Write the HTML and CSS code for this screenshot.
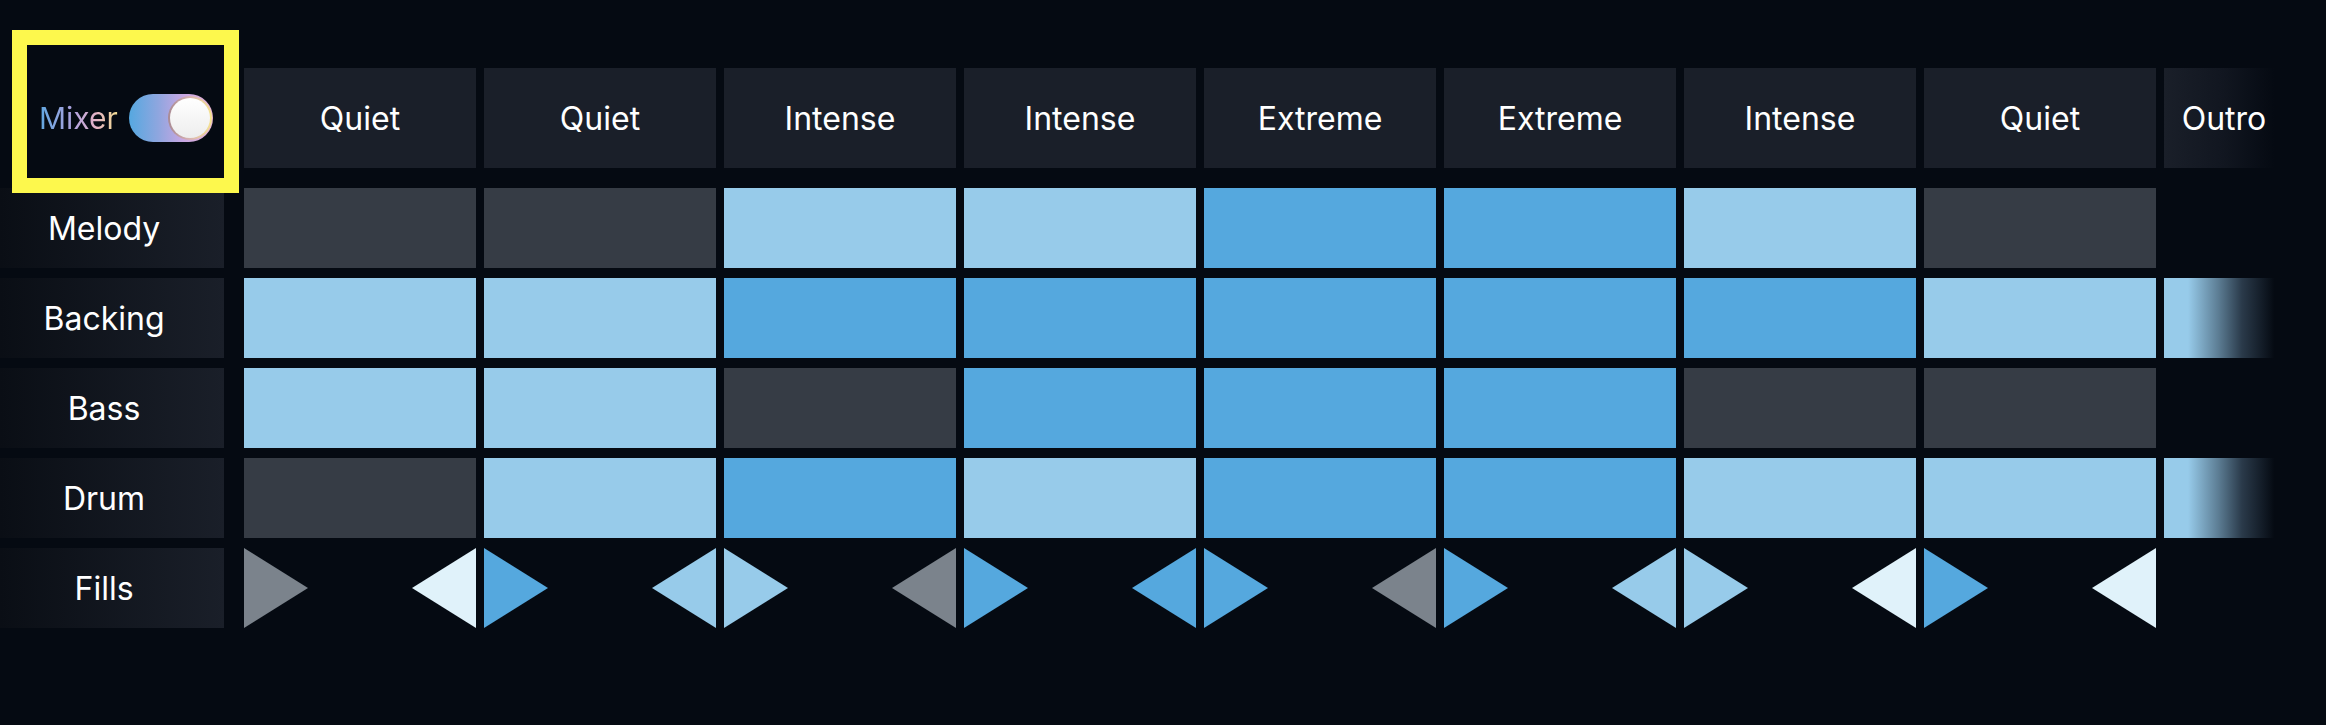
FILE: index.html
```html
<!DOCTYPE html>
<html lang="en">
<head>
<meta charset="utf-8">
<title>Mixer</title>
<link rel="stylesheet" href="styles.css">
</head>
<body>
<div class="app">
  <div class="row header-row">
    <div class="corner">
      <span class="mixer-label">Mixer</span>
      <div class="toggle"><div class="knob"></div></div>
    </div>
    <div class="hcell">Quiet</div>
    <div class="hcell">Quiet</div>
    <div class="hcell">Intense</div>
    <div class="hcell">Intense</div>
    <div class="hcell">Extreme</div>
    <div class="hcell">Extreme</div>
    <div class="hcell">Intense</div>
    <div class="hcell">Quiet</div>
    <div class="hcell outro">Outro</div>
  </div>

  <div class="rows">
    <div class="row track-row">
      <div class="label">Melody</div>
      <div class="cell off"></div>
      <div class="cell off"></div>
      <div class="cell light"></div>
      <div class="cell light"></div>
      <div class="cell blue"></div>
      <div class="cell blue"></div>
      <div class="cell light"></div>
      <div class="cell off"></div>
      <div class="cell outro-empty"></div>
    </div>
    <div class="row track-row">
      <div class="label">Backing</div>
      <div class="cell light"></div>
      <div class="cell light"></div>
      <div class="cell blue"></div>
      <div class="cell blue"></div>
      <div class="cell blue"></div>
      <div class="cell blue"></div>
      <div class="cell blue"></div>
      <div class="cell light"></div>
      <div class="cell outro-light"></div>
    </div>
    <div class="row track-row">
      <div class="label">Bass</div>
      <div class="cell light"></div>
      <div class="cell light"></div>
      <div class="cell off"></div>
      <div class="cell blue"></div>
      <div class="cell blue"></div>
      <div class="cell blue"></div>
      <div class="cell off"></div>
      <div class="cell off"></div>
      <div class="cell outro-empty"></div>
    </div>
    <div class="row track-row">
      <div class="label">Drum</div>
      <div class="cell off"></div>
      <div class="cell light"></div>
      <div class="cell blue"></div>
      <div class="cell light"></div>
      <div class="cell blue"></div>
      <div class="cell blue"></div>
      <div class="cell light"></div>
      <div class="cell light"></div>
      <div class="cell outro-light"></div>
    </div>
    <div class="row track-row">
      <div class="label">Fills</div>
      <div class="fill"><span class="tri right gray"></span><span class="tri left pale"></span></div>
      <div class="fill"><span class="tri right blue"></span><span class="tri left light"></span></div>
      <div class="fill"><span class="tri right light"></span><span class="tri left gray"></span></div>
      <div class="fill"><span class="tri right blue"></span><span class="tri left blue"></span></div>
      <div class="fill"><span class="tri right blue"></span><span class="tri left gray"></span></div>
      <div class="fill"><span class="tri right blue"></span><span class="tri left light"></span></div>
      <div class="fill"><span class="tri right light"></span><span class="tri left pale"></span></div>
      <div class="fill"><span class="tri right blue"></span><span class="tri left pale"></span></div>
      <div class="fill outro-empty"></div>
    </div>
  </div>

  <div class="highlight"></div>
</div>
</body>
</html>
```

FILE: styles.css
```css
* { box-sizing: border-box; }

html, body {
  margin: 0;
  padding: 0;
  background: #050a12;
  overflow: hidden;
}

body {
  font-family: Inter, "Noto Sans", "Liberation Sans", sans-serif;
  color: #ffffff;
  width: 2326px;
  height: 725px;
}

.app {
  position: relative;
  padding-top: 68px;
}

.row {
  display: flex;
  gap: 8px;
}

.header-row {
  height: 100px;
  margin-bottom: 20px;
}

.corner {
  width: 224px;
  margin-right: 12px;
  flex: none;
  display: flex;
  align-items: center;
  padding-left: 39px;
  gap: 11px;
}

.mixer-label {
  font-size: 30px;
  font-weight: 400;
  background: linear-gradient(90deg, #5ea6e0 0%, #b3a3de 45%, #e4b2c6 72%, #f3df92 100%);
  -webkit-background-clip: text;
  background-clip: text;
  color: transparent;
  line-height: 1;
}

.toggle {
  width: 84px;
  height: 48px;
  border-radius: 24px;
  background: linear-gradient(90deg, #55a8e0 0%, #8fa6df 35%, #c9a7e3 65%, #e6b4d2 100%);
  position: relative;
  flex: none;
}

.knob {
  position: absolute;
  right: 1px;
  top: 2px;
  width: 44px;
  height: 44px;
  border-radius: 50%;
  padding: 2px;
  background: linear-gradient(90deg, #a88a93 0%, #d9b3b3 50%, #f6e48e 100%);
}

.knob::after {
  content: "";
  display: block;
  width: 100%;
  height: 100%;
  border-radius: 50%;
  background: linear-gradient(180deg, #ffffff 0%, #ededed 100%);
}

.hcell {
  width: 232px;
  flex: none;
  background: #1a1f29;
  display: flex;
  align-items: center;
  justify-content: center;
  font-size: 32px;
  font-weight: 400;
}

.hcell.outro {
  width: 120px;
  background: linear-gradient(90deg, #1a1f29 0%, #111620 50%, #050a12 92%);
}

.rows {
  display: flex;
  flex-direction: column;
  gap: 10px;
}

.track-row {
  height: 80px;
}

.label {
  width: 224px;
  margin-right: 12px;
  flex: none;
  background: linear-gradient(90deg, #0a0e15 0%, #1a1f29 100%);
  display: flex;
  align-items: center;
  justify-content: center;
  padding-right: 16px;
  font-size: 32px;
  font-weight: 400;
}

.cell {
  width: 232px;
  flex: none;
}

.cell.off { background: #363c45; }
.cell.light { background: #97cbea; }
.cell.blue { background: #55a8de; }

.cell.outro-empty,
.fill.outro-empty {
  width: 120px;
  background: transparent;
}

.cell.outro-light {
  width: 120px;
  background: linear-gradient(90deg, #97cbea 0%, #97cbea 20%, #5d7e95 45%, #2a3a4a 65%, #050a12 92%);
}

.fill {
  width: 232px;
  flex: none;
  display: flex;
  justify-content: space-between;
}

.tri {
  display: block;
  width: 64px;
  height: 80px;
}

.tri.right { clip-path: polygon(0 0, 100% 50%, 0 100%); }
.tri.left { clip-path: polygon(100% 0, 0 50%, 100% 100%); }

.tri.gray { background: #7b838c; }
.tri.pale { background: #e0f2fa; }
.tri.light { background: #97cbea; }
.tri.blue { background: #55a8de; }

.highlight {
  position: absolute;
  left: 12px;
  top: 30px;
  width: 227px;
  height: 163px;
  border: 15px solid #fdf84d;
  pointer-events: none;
}
```
